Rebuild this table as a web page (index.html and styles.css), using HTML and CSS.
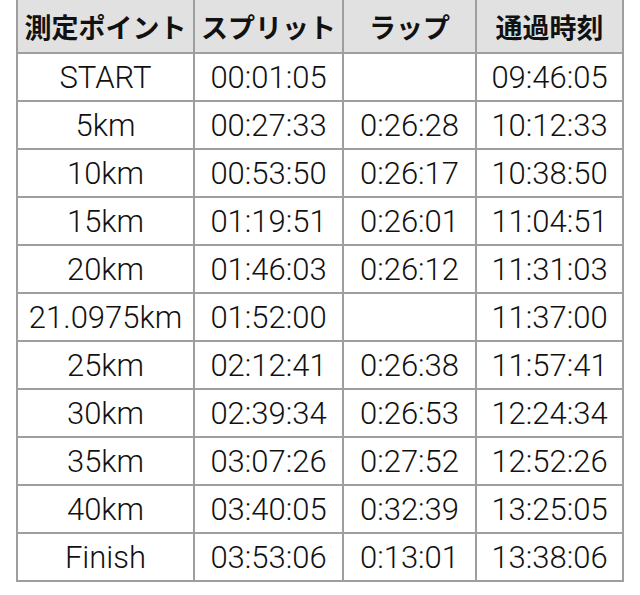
FILE: index.html
```html
<!DOCTYPE html>
<html lang="ja">
<head>
<meta charset="utf-8">
<title>スプリット</title>
<link rel="stylesheet" href="styles.css">
</head>
<body>
<table class="splits">
  <colgroup>
    <col class="c1"><col class="c2"><col class="c3"><col class="c4">
  </colgroup>
  <thead>
    <tr><th>測定ポイント</th><th>スプリット</th><th>ラップ</th><th>通過時刻</th></tr>
  </thead>
  <tbody>
    <tr><td>START</td><td>00:01:05</td><td></td><td>09:46:05</td></tr>
    <tr><td>5km</td><td>00:27:33</td><td>0:26:28</td><td>10:12:33</td></tr>
    <tr><td>10km</td><td>00:53:50</td><td>0:26:17</td><td>10:38:50</td></tr>
    <tr><td>15km</td><td>01:19:51</td><td>0:26:01</td><td>11:04:51</td></tr>
    <tr><td>20km</td><td>01:46:03</td><td>0:26:12</td><td>11:31:03</td></tr>
    <tr><td>21.0975km</td><td>01:52:00</td><td></td><td>11:37:00</td></tr>
    <tr><td>25km</td><td>02:12:41</td><td>0:26:38</td><td>11:57:41</td></tr>
    <tr><td>30km</td><td>02:39:34</td><td>0:26:53</td><td>12:24:34</td></tr>
    <tr><td>35km</td><td>03:07:26</td><td>0:27:52</td><td>12:52:26</td></tr>
    <tr><td>40km</td><td>03:40:05</td><td>0:32:39</td><td>13:25:05</td></tr>
    <tr><td>Finish</td><td>03:53:06</td><td>0:13:01</td><td>13:38:06</td></tr>
  </tbody>
</table>
</body>
</html>
```
FILE: styles.css
```css
html, body {
  margin: 0;
  padding: 0;
  background: #ffffff;
}
body {
  font-family: Roboto, "Noto Sans CJK JP", sans-serif;
  color: #111111;
}
.splits {
  border-collapse: collapse;
  table-layout: fixed;
  width: 608px;
  margin-left: 16px;
}
.c1 { width: 177px; }
.c2 { width: 149px; }
.c3 { width: 133px; }
.c4 { width: 147px; }
.splits th,
.splits td {
  border: 2px solid #9e9e9e;
  text-align: center;
  padding: 0;
  white-space: nowrap;
}
.splits th {
  border-top: 0;
  height: 52px;
  background: #e1e1e1;
  font-family: "Noto Sans CJK JP", sans-serif;
  font-weight: bold;
  font-size: 27px;
  line-height: 1;
}
.splits td {
  height: 46px;
  font-size: 31px;
  font-weight: 300;
  line-height: 1;
}
```
